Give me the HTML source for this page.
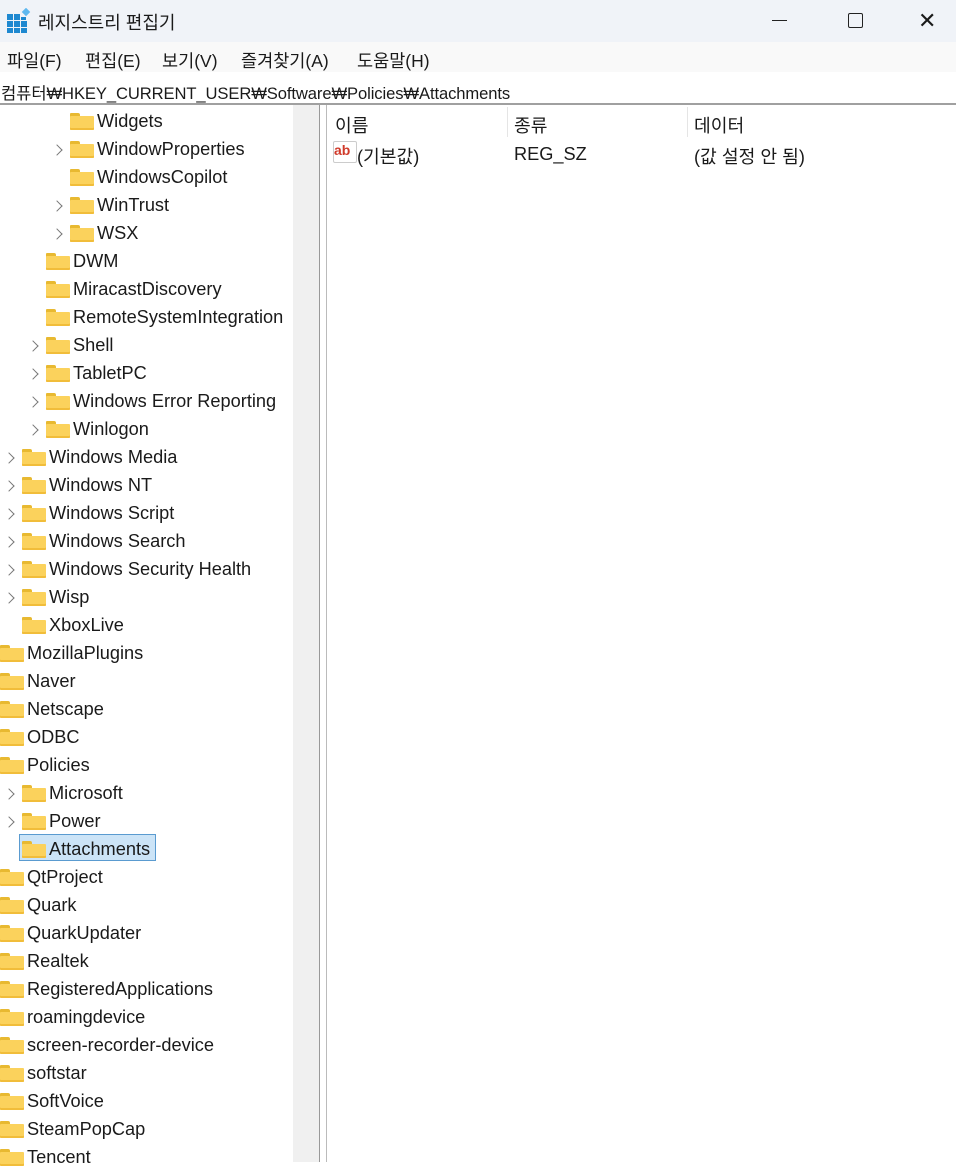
<!DOCTYPE html><html><head><meta charset="utf-8"><style>
body{margin:0;width:956px;height:1162px;overflow:hidden;background:#fff;font-family:"Liberation Sans","Noto Sans CJK KR",sans-serif;color:#1a1a1a;position:relative}
.a{position:absolute;white-space:nowrap}
.f{position:absolute;width:24px;height:17px}
.f:before{content:"";position:absolute;left:0;top:0;width:10px;height:4px;background:#e8b931;border-radius:1px 2px 0 0}
.f:after{content:"";position:absolute;left:0;top:3px;width:24px;height:14px;background:#fbd25c;border-radius:1px;box-shadow:inset 0 -2px 0 #f1bd3a}
.t{font-size:17.5px}
.r{font-size:18.2px}
.c{position:absolute;width:7px;height:7px;border-right:1.3px solid #777;border-top:1.3px solid #777;transform:rotate(45deg)}
</style></head><body>
<div class="a" style="left:0;top:0;width:956px;height:42px;background:#f0f3f8"></div>
<svg class="a" style="left:6px;top:8px" width="26" height="26" viewBox="0 0 26 26"><g fill="#1e88d0"><rect x="1" y="6" width="6" height="6"/><rect x="8" y="6" width="6" height="6"/><rect x="15" y="9" width="5" height="3"/><rect x="1" y="13" width="6" height="6"/><rect x="8" y="13" width="6" height="6"/><rect x="15" y="13" width="6" height="6"/><rect x="1" y="20" width="6" height="5"/><rect x="8" y="20" width="6" height="5"/><rect x="15" y="20" width="6" height="5"/></g><rect x="17" y="1" width="6" height="6" transform="rotate(45 20 4)" fill="#5fb8ef"/></svg>
<div class="a" style="left:38px;top:9px;font-size:18px">레지스트리 편집기</div>
<div class="a" style="left:772px;top:20px;width:15px;height:1px;background:#222"></div>
<div class="a" style="left:848px;top:13px;width:13px;height:13px;border:1.3px solid #222;border-radius:2px"></div>
<div class="a" style="left:918px;top:8px;font-size:22px;font-weight:300">✕</div>
<div class="a" style="left:0;top:42px;width:956px;height:30px;background:#f9f9f9"></div>
<div class="a t" style="left:7px;top:48px">파일(F)</div>
<div class="a t" style="left:85px;top:48px">편집(E)</div>
<div class="a t" style="left:162px;top:48px">보기(V)</div>
<div class="a t" style="left:241px;top:48px">즐겨찾기(A)</div>
<div class="a t" style="left:357px;top:48px">도움말(H)</div>
<div class="a" style="left:1px;top:80px;font-size:16.6px;letter-spacing:-0.1px">컴퓨터₩HKEY_CURRENT_USER₩Software₩Policies₩Attachments</div>
<div class="a" style="left:0;top:103px;width:956px;height:2px;background:#a0a0a0"></div>
<div class="a" style="left:293px;top:105px;width:26px;height:1057px;background:#f0f0f0"></div>
<div class="a" style="left:319px;top:105px;width:1px;height:1057px;background:#999"></div>
<div class="a" style="left:326px;top:105px;width:1px;height:1057px;background:#bbb"></div>
<div class="a r" style="left:335px;top:112px">이름</div>
<div class="a" style="left:507px;top:107px;width:1px;height:30px;background:#e5e5e5"></div>
<div class="a r" style="left:514px;top:112px">종류</div>
<div class="a" style="left:687px;top:107px;width:1px;height:30px;background:#e5e5e5"></div>
<div class="a r" style="left:694px;top:112px">데이터</div>
<div class="a" style="left:333px;top:141px;width:22px;height:20px;background:#fff;border:1px solid #ccc;border-radius:2px"></div>
<div class="a" style="left:334px;top:142px;font-size:14px;font-weight:bold;color:#d03a2a">ab</div>
<div class="a r" style="left:357px;top:143px">(기본값)</div>
<div class="a r" style="left:514px;top:144px">REG_SZ</div>
<div class="a r" style="left:694px;top:143px">(값 설정 안 됨)</div>
<div class="a" style="left:19px;top:834px;width:137px;height:27px;background:#cce4f7;border:1px solid #5a9bd0;box-sizing:border-box"></div>
<div id="tree"></div>
<script>
var rows=[[70,"Widgets",0],[70,"WindowProperties",1],[70,"WindowsCopilot",0],[70,"WinTrust",1],[70,"WSX",1],[46,"DWM",0],[46,"MiracastDiscovery",0],[46,"RemoteSystemIntegration",0],[46,"Shell",1],[46,"TabletPC",1],[46,"Windows Error Reporting",1],[46,"Winlogon",1],[22,"Windows Media",1],[22,"Windows NT",1],[22,"Windows Script",1],[22,"Windows Search",1],[22,"Windows Security Health",1],[22,"Wisp",1],[22,"XboxLive",0],[0,"MozillaPlugins",0],[0,"Naver",0],[0,"Netscape",0],[0,"ODBC",0],[0,"Policies",0],[22,"Microsoft",1],[22,"Power",1],[22,"Attachments",0],[0,"QtProject",0],[0,"Quark",0],[0,"QuarkUpdater",0],[0,"Realtek",0],[0,"RegisteredApplications",0],[0,"roamingdevice",0],[0,"screen-recorder-device",0],[0,"softstar",0],[0,"SoftVoice",0],[0,"SteamPopCap",0],[0,"Tencent",0]];
var h="";rows.forEach(function(r,i){var y=107+i*28;h+='<div class="f" style="left:'+r[0]+'px;top:'+(y+6)+'px"></div><div class="a r" style="left:'+(r[0]+27)+'px;top:'+(y+4)+'px">'+r[1]+'</div>';if(r[2])h+='<div class="c" style="left:'+(r[0]-17)+'px;top:'+(y+11)+'px"></div>';});
document.getElementById("tree").innerHTML=h;
</script>
</body></html>
